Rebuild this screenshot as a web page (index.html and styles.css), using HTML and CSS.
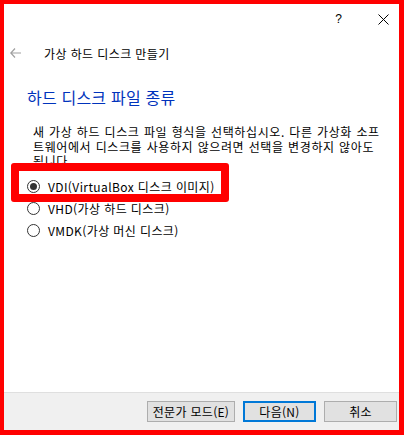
FILE: index.html
```html
<!DOCTYPE html>
<html lang="ko">
<head>
<meta charset="utf-8">
<link rel="stylesheet" href="styles.css">
</head>
<body>
<div class="frame">
  <div class="titlebar">
    <span class="help">?</span>
    <span class="close">
      <svg width="11" height="11" viewBox="0 0 11 11"><path d="M0.5 0.5 L10.5 10.5 M10.5 0.5 L0.5 10.5" stroke="#000" stroke-width="1" fill="none"/></svg>
    </span>
  </div>
  <div class="navrow">
    <svg class="back" width="11" height="10" viewBox="0 0 11 10"><path d="M5 0.5 L0.8 5 L5 9.5 M0.8 5 H11" stroke="#a0a0a0" stroke-width="1.2" fill="none"/></svg>
    <span class="navtitle">가상 하드 디스크 만들기</span>
  </div>
  <div class="content">
    <h1 class="heading">하드 디스크 파일 종류</h1>
    <p class="desc">새 가상 하드 디스크 파일 형식을 선택하십시오. 다른 가상화 소프트웨어에서 디스크를 사용하지 않으려면 선택을 변경하지 않아도 <span class="nowrap">됩니다.</span></p>
    <div class="options">
      <div class="option highlighted">
        <span class="radio checked"></span><span class="label">VDI(VirtualBox 디스크 이미지)</span>
      </div>
      <div class="option">
        <span class="radio"></span><span class="label">VHD(가상 하드 디스크)</span>
      </div>
      <div class="option">
        <span class="radio"></span><span class="label">VMDK(가상 머신 디스크)</span>
      </div>
    </div>
  </div>
  <div class="footer">
    <button class="btn expert">전문가 모드(E)</button>
    <button class="btn default">다음(N)</button>
    <button class="btn">취소</button>
  </div>
</div>
</body>
</html>
```
FILE: styles.css
```css
*, *::before, *::after { box-sizing: border-box; }
html, body { margin: 0; padding: 0; background: #fff; }
body {
  font-family: "Noto Sans CJK KR", "Noto Sans", sans-serif;
  font-size: 12px;
  color: #000;
}
.frame {
  width: 404px;
  height: 435px;
  border-style: solid;
  border-color: #ff0000;
  border-width: 4px 5px 5px 4px;
  background: #fff;
  display: flex;
  flex-direction: column;
}
.titlebar {
  height: 30px;
  display: flex;
  justify-content: flex-end;
  align-items: center;
  padding-right: 10px;
}
.help {
  font-family: "Liberation Sans", sans-serif;
  font-size: 12px;
  margin-right: 36px;
  line-height: 1;
}
.close { display: flex; width: 11px; height: 11px; }
.navrow {
  display: flex;
  align-items: center;
  height: 38px;
  padding-left: 6px;
}
.back { margin-right: 23px; }
.navtitle { font-size: 12px; letter-spacing: 0.4px; }
.content {
  flex: 1;
  padding-left: 23px;
  padding-right: 8px;
}
.heading {
  margin: 0;
  font-weight: normal;
  font-size: 16px;
  letter-spacing: 0.2px;
  color: #0033bc;
  line-height: 22px;
  margin-top: 14px;
}
.desc {
  margin: 17px 0 0 6px;
  line-height: 14.5px;
  letter-spacing: 0.6px;
  word-spacing: 0.5px;
}
.nowrap { white-space: nowrap; }
.options {
  margin-top: 7px;
  display: flex;
  flex-direction: column;
}
.option {
  display: flex;
  align-items: center;
  height: 22px;
  position: relative;
  letter-spacing: 0.4px;
}
.option.highlighted::after {
  content: "";
  position: absolute;
  left: -16px;
  top: -13px;
  width: 218px;
  height: 39px;
  border: 8px solid #ff0000;
  border-radius: 3px;
}
.radio {
  width: 13px;
  height: 13px;
  border: 1px solid #333;
  border-radius: 50%;
  background: #fff;
  margin-right: 8px;
  margin-left: 0;
  display: flex;
  align-items: center;
  justify-content: center;
}
.radio.checked::before {
  content: "";
  width: 7px;
  height: 7px;
  border-radius: 50%;
  background: #333;
}
.footer {
  height: 38px;
  background: #f0f0f0;
  border-top: 1px solid #dfdfdf;
  display: flex;
  justify-content: flex-end;
  align-items: center;
  gap: 8px;
  padding-right: 2px;
}
.btn {
  font-family: "Noto Sans CJK KR", sans-serif;
  font-size: 12px;
  letter-spacing: 0.3px;
  height: 21px;
  width: 73px;
  padding: 0;
  background: #e1e1e1;
  border: 1px solid #adadad;
  color: #000;
  line-height: 1;
}
.btn.expert { width: 88px; }
.btn.default { border: 2px solid #0078d7; }
```
